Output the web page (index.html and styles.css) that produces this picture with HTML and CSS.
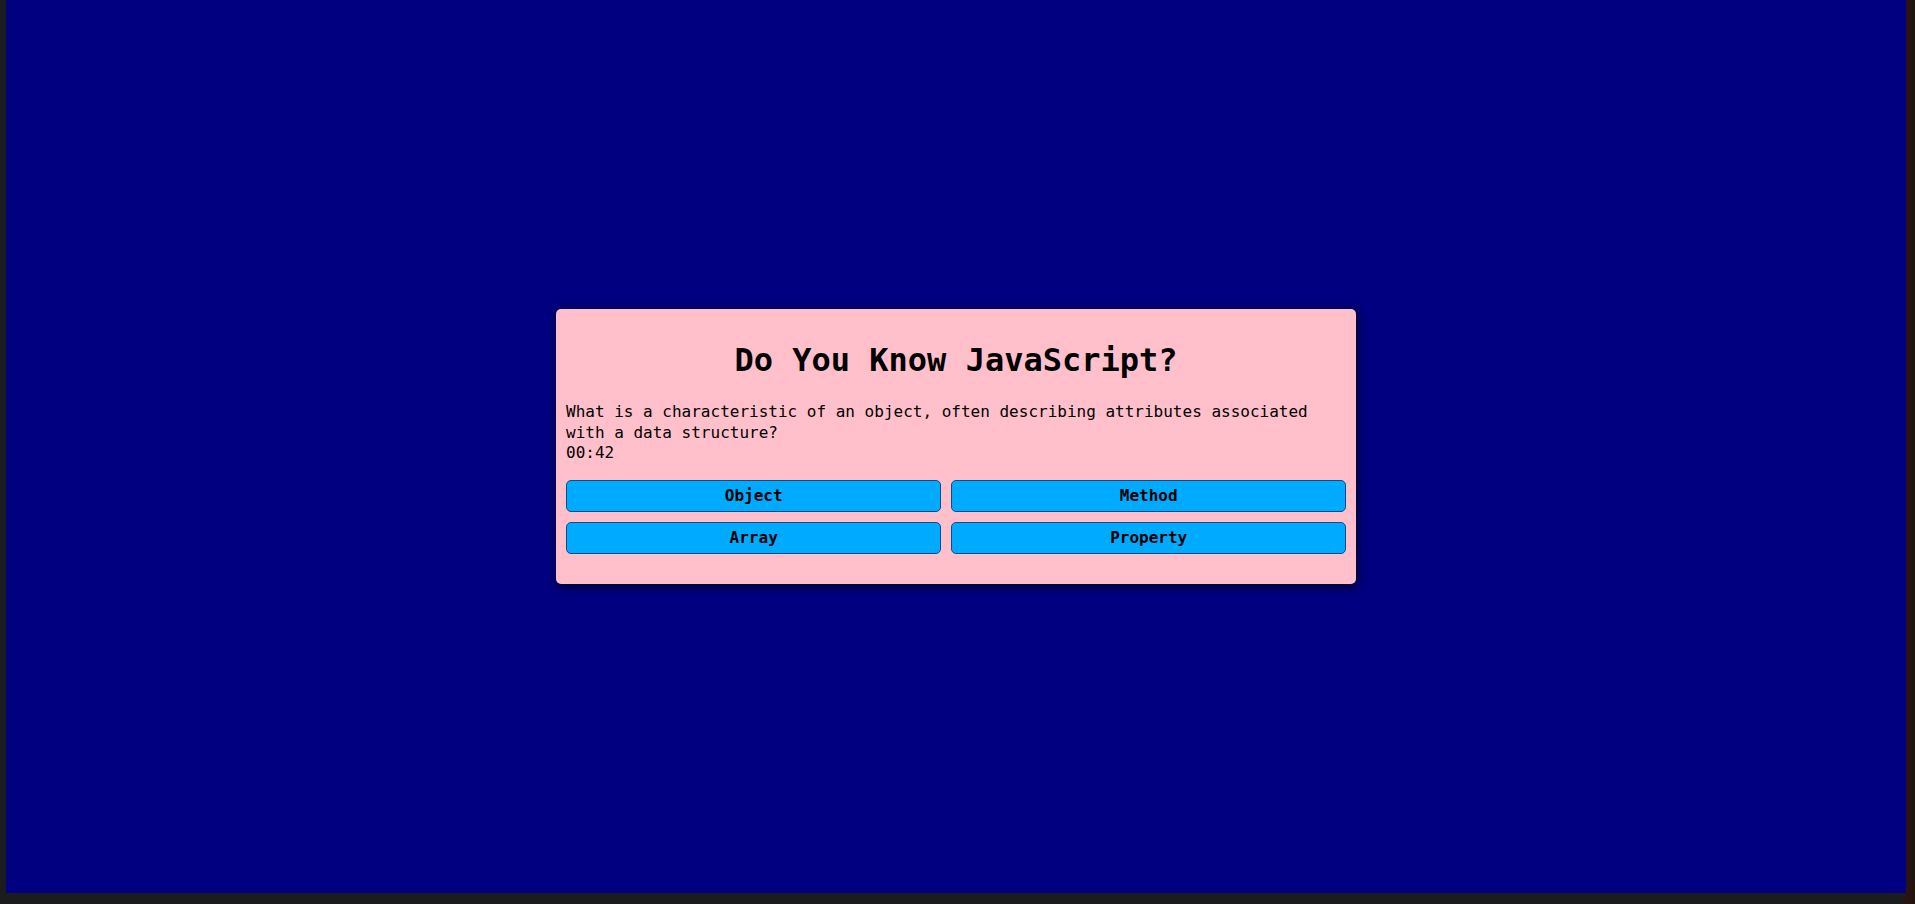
FILE: index.html
```html
<!DOCTYPE html>
<html lang="en">
<head>
<meta charset="utf-8">
<title>Do You Know JavaScript?</title>
<link rel="stylesheet" href="styles.css">
</head>
<body>
<main class="stage">
  <section class="card">
    <h1 class="title">Do You Know JavaScript?</h1>
    <p class="question">What is a characteristic of an object, often describing attributes associated with a data structure?</p>
    <div class="timer">00:42</div>
    <div class="answers">
      <button class="answer">Object</button>
      <button class="answer">Method</button>
      <button class="answer">Array</button>
      <button class="answer">Property</button>
    </div>
  </section>
</main>
</body>
</html>
```

FILE: styles.css
```css
html, body {
  margin: 0;
  height: 100%;
}

body {
  padding: 0 9px 11px 6px;
  box-sizing: border-box;
  background: linear-gradient(to right, #1b1c1e 0, #1b1c1e 1900px, #2a1411 1906px, #22130f 100%);
  font-family: "DejaVu Sans Mono", "Liberation Mono", monospace;
}

.stage {
  height: 893px;
  background: #000080;
  display: flex;
  align-items: center;
  justify-content: center;
}

.card {
  width: 800px;
  box-sizing: border-box;
  padding: 10px 10px 30px;
  background: #ffc0cb;
  border-radius: 5px;
  box-shadow: 1px 2px 10px rgba(0, 0, 0, 0.85);
  color: #000;
}

.title {
  margin: 23px 0 23px;
  font-size: 32px;
  font-weight: bold;
  line-height: 37px;
  text-align: center;
}

.question {
  margin: 0;
  font-size: 16px;
  line-height: 20.5px;
}

.timer {
  font-size: 16px;
  line-height: 20.5px;
}

.answers {
  margin-top: 16px;
  display: grid;
  grid-template-columns: auto auto;
  gap: 10px;
}

.answer {
  height: 32px;
  padding: 0 8px;
  background: #00aaff;
  border: 1px solid #0b4f86;
  border-radius: 5px;
  font-family: "DejaVu Sans Mono", "Liberation Mono", monospace;
  font-size: 16px;
  font-weight: bold;
  color: #000;
  cursor: pointer;
}
```
